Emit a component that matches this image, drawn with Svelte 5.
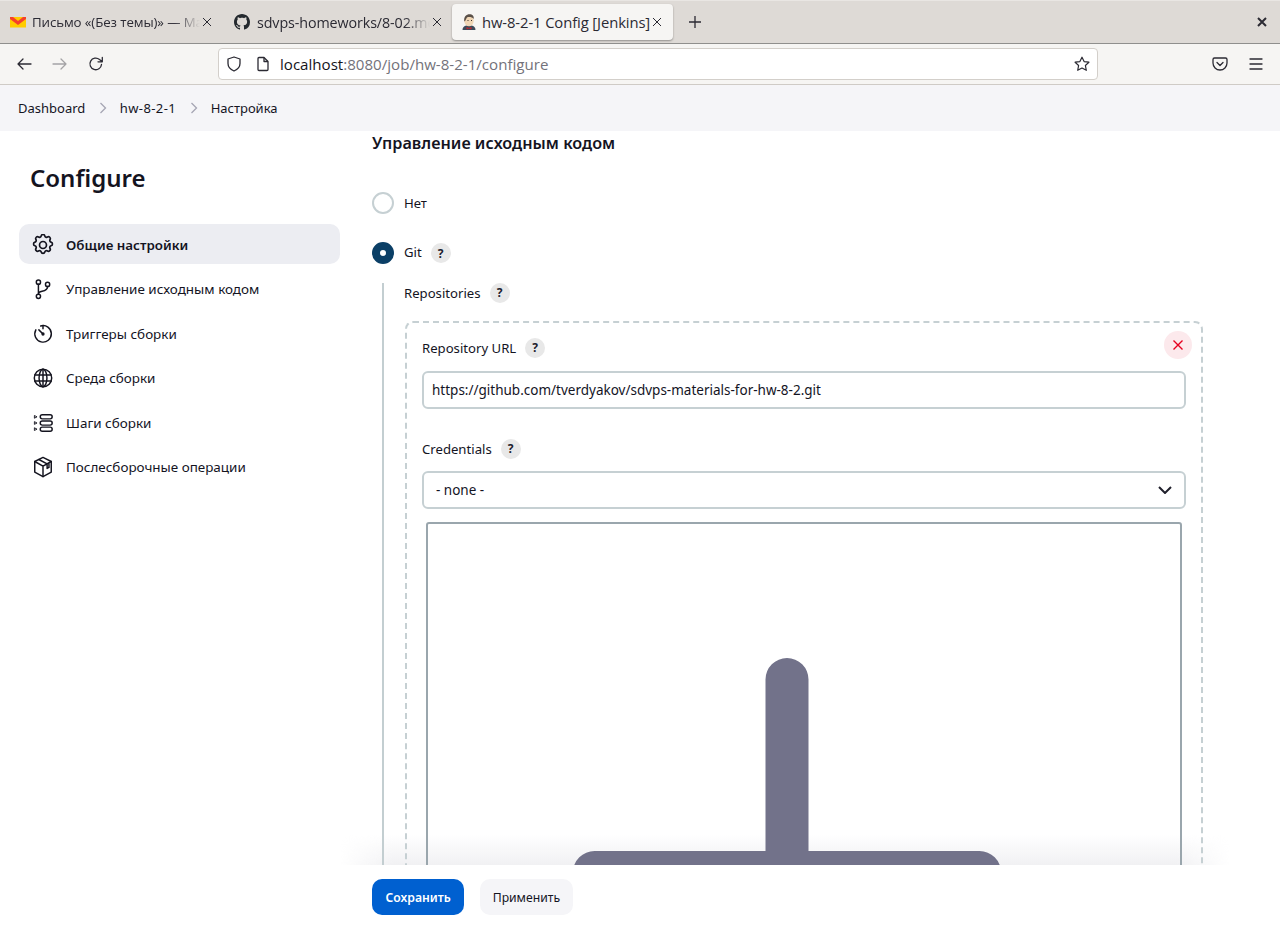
<script>
  const navItems = [
    { label: 'Общие настройки', icon: 'gear', active: true },
    { label: 'Управление исходным кодом', icon: 'branch' },
    { label: 'Триггеры сборки', icon: 'timer' },
    { label: 'Среда сборки', icon: 'globe' },
    { label: 'Шаги сборки', icon: 'steps' },
    { label: 'Послесборочные операции', icon: 'box' }
  ];
</script>

<div class="window">
  <div class="tabbar">
    <div class="tab mail">
      <svg class="favicon" viewBox="0 0 16 16"><path d="M0 3h16v10.5H0z" fill="#ffcc00"/><path d="M0 3h3l5 4 5-4h3v2l-8 6-8-6z" fill="#f5402c"/></svg>
      <span class="tab-title faded">Письмо «(Без темы)» — Mail</span>
      <svg class="tab-x" viewBox="0 0 10 10"><path d="M1 1l8 8M9 1l-8 8"/></svg>
    </div>
    <div class="tab github">
      <svg class="favicon" viewBox="0 0 16 16"><path fill="#24292e" d="M8 0C3.58 0 0 3.58 0 8c0 3.54 2.29 6.53 5.47 7.59.4.07.55-.17.55-.38 0-.19-.01-.82-.01-1.49-2.01.37-2.53-.49-2.69-.94-.09-.23-.48-.94-.82-1.13-.28-.15-.68-.52-.01-.53.63-.01 1.08.58 1.23.82.72 1.21 1.87.87 2.33.66.07-.52.28-.87.51-1.07-1.78-.2-3.64-.89-3.64-3.95 0-.87.31-1.59.82-2.15-.08-.2-.36-1.02.08-2.12 0 0 .67-.21 2.2.82.64-.18 1.32-.27 2-.27s1.36.09 2 .27c1.53-1.04 2.2-.82 2.2-.82.44 1.1.16 1.92.08 2.12.51.56.82 1.27.82 2.15 0 3.07-1.87 3.75-3.65 3.95.29.25.54.73.54 1.48 0 1.07-.01 1.93-.01 2.2 0 .21.15.46.55.38A8.01 8.01 0 0 0 16 8c0-4.42-3.58-8-8-8z"/></svg>
      <span class="tab-title faded">sdvps-homeworks/8-02.md</span>
      <svg class="tab-x" viewBox="0 0 10 10"><path d="M1 1l8 8M9 1l-8 8"/></svg>
    </div>
    <div class="tab current">
      <svg class="favicon" viewBox="0 0 16 16">
        <path d="M1.500 16c0-2.500 1.500-4 4-4.500h5c2.500.5 4 2 4 4.500z" fill="#3d4a5a"/>
        <path d="M5.500 13l2.500 1 2.500-1v2.500L8 14.500l-2.500 1z" fill="#c2262e"/>
        <ellipse cx="8" cy="6.800" rx="4.700" ry="5.500" fill="#f0d6b5"/>
        <path d="M3.300 7.500C2.500 2.500 5.500.3 8.500.3c3 0 4.700 2 4.200 4.700-1.500-2-5-2.500-6.700-1.500C5 4.800 5 6.500 3.300 7.500z" fill="#5a5048"/>
        <path d="M6.500 6.500h1M10 6.500h1" stroke="#3a3028" stroke-width="1"/>
      </svg>
      <span class="tab-title">hw-8-2-1 Config [Jenkins]</span>
      <svg class="tab-x" viewBox="0 0 10 10"><path d="M1 1l8 8M9 1l-8 8"/></svg>
    </div>
    <svg class="new-tab" viewBox="0 0 14 14"><path d="M7 1v12M1 7h12"/></svg>
    <svg class="win-close" viewBox="0 0 10 10"><path d="M1 1l8 8M9 1l-8 8"/></svg>
  </div>

  <div class="navbar">
    <svg class="nav-icon back" viewBox="0 0 16 16"><path d="M15 8H2M7 3L2 8l5 5"/></svg>
    <svg class="nav-icon fwd" viewBox="0 0 16 16"><path d="M1 8h13M9 3l5 5-5 5"/></svg>
    <svg class="nav-icon reload" viewBox="0 0 16 16"><path d="M13.500 8.500A5.800 5.800 0 1 1 11.500 3.500L14 5.500M14.300 1.500v4.300h-4.300"/></svg>
    <div class="urlbar">
      <svg class="url-icon" viewBox="0 0 16 16"><path d="M8 1l6 2v4.500c0 3.500-2.500 6-6 7.500-3.500-1.500-6-4-6-7.500V3z"/></svg>
      <svg class="url-icon doc" viewBox="0 0 16 16"><path d="M3 2.500a1 1 0 0 1 1-1h5l4 4v8a1 1 0 0 1-1 1H4a1 1 0 0 1-1-1z"/><path d="M9 1.500v4h4" /></svg>
      <span class="url"><b>localhost</b>:8080/job/hw-8-2-1/configure</span>
      <svg class="star" viewBox="0 0 16 16"><path d="M8 1.200l2.100 4.400 4.800.6-3.500 3.300.9 4.800L8 12l-4.300 2.300.9-4.800L1.100 6.200l4.800-.6z"/></svg>
    </div>
    <svg class="nav-icon pocket" viewBox="0 0 16 16"><path d="M2.500 2h11A1.500 1.500 0 0 1 15 3.500V7a7 7 0 0 1-14 0V3.500A1.500 1.500 0 0 1 2.500 2z"/><path d="M5 6.500l3 3 3-3"/></svg>
    <svg class="nav-icon menu" viewBox="0 0 16 16"><path d="M2 3h12M2 8h12M2 13h12"/></svg>
  </div>

  <div class="breadcrumbs">
    <span>Dashboard</span>
    <svg class="crumb-sep" viewBox="0 0 8 12"><path d="M1.500 1l5 5-5 5"/></svg>
    <span class="crumb-job">hw-8-2-1</span>
    <svg class="crumb-sep" viewBox="0 0 8 12"><path d="M1.500 1l5 5-5 5"/></svg>
    <span>Настройка</span>
  </div>

  <div class="page">
    <div class="fade"></div>

    <aside class="sidebar">
      <h1>Configure</h1>
      <nav>
        {#each navItems as item}
          <div class="nav-item" class:active={item.active}>
            <svg class="side-icon" viewBox="0 0 24 24">
              {#if item.icon === 'gear'}
                <g transform="translate(12 12) scale(1.150) translate(-12 -12)">
                  <path d="M10.300 3.300c.4-1.700 3-1.700 3.400 0a1.700 1.700 0 0 0 2.600 1.100c1.500-.9 3.300.8 2.400 2.400a1.700 1.700 0 0 0 1 2.500c1.700.4 1.700 3 0 3.400a1.700 1.700 0 0 0-1 2.600c.9 1.500-.9 3.300-2.400 2.400a1.700 1.700 0 0 0-2.600 1c-.4 1.700-3 1.700-3.400 0a1.700 1.700 0 0 0-2.600-1c-1.500.9-3.300-.9-2.400-2.400a1.700 1.700 0 0 0-1-2.600c-1.700-.4-1.700-3 0-3.400a1.700 1.700 0 0 0 1-2.500c-.9-1.600.9-3.300 2.400-2.400a1.700 1.700 0 0 0 2.600-1.100z"/>
                  <circle cx="12" cy="12" r="3.300"/>
                </g>
              {:else if item.icon === 'branch'}
                <circle cx="7" cy="4.500" r="2.300"/><circle cx="7" cy="20" r="2.300"/><circle cx="17" cy="7" r="2.300"/>
                <path d="M7 6.800v11M17 9.300c0 4-3.500 4.700-6 5.200-2 .4-4 1-4 3"/>
              {:else if item.icon === 'timer'}
                <path d="M9.500 3.200A9 9 0 1 1 4.200 7.500"/><path d="M12 12L7.500 7.500M12 2.800v3.500"/><circle cx="12" cy="12" r="1"/>
              {:else if item.icon === 'globe'}
                <circle cx="12" cy="12" r="9.500"/><ellipse cx="12" cy="12" rx="4.300" ry="9.500"/><path d="M3 8.800h18M3 15.200h18M12 2.500v19"/>
              {:else if item.icon === 'steps'}
                <rect x="9" y="3" width="13" height="4.500" rx="2.200"/><rect x="9" y="9.800" width="13" height="4.500" rx="2.200"/><rect x="9" y="16.500" width="13" height="4.500" rx="2.200"/>
                <path class="thin" d="M3 4l2.500 1.300L3 6.600zM3 10.700l2.500 1.300L3 13.300zM3 17.400l2.500 1.300L3 20z"/>
              {:else}
                <path d="M12 1.500l9 4.500v11.500L12 22.500 3 17.500V6z"/><path d="M3 6l9 5 9-5M12 11v11.500M7.500 3.800l9 4.800v5l2-1.100V7.500"/>
              {/if}
            </svg>
            <span>{item.label}</span>
          </div>
        {/each}
      </nav>
    </aside>

    <main class="content">
      <h2>Управление исходным кодом</h2>

      <div class="radio-row none">
        <span class="radio"></span>
        <span class="lbl">Нет</span>
      </div>
      <div class="radio-row git">
        <span class="radio on"></span>
        <span class="lbl">Git</span>
        <span class="help">?</span>
      </div>

      <div class="nested">
        <div class="field-label repos">Repositories <span class="help">?</span></div>
        <div class="repeat-box">
          <button class="remove" aria-label="Remove">
            <svg viewBox="0 0 12 12"><path d="M1.500 1.500l9 9M10.500 1.500l-9 9"/></svg>
          </button>
          <div class="field-label">Repository URL <span class="help">?</span></div>
          <input class="text-input" value="https://github.com/tverdyakov/sdvps-materials-for-hw-8-2.git" />
          <div class="field-label creds">Credentials <span class="help">?</span></div>
          <div class="select">
            <span>- none -</span>
            <svg viewBox="0 0 14 8"><path d="M1 1l6 6 6-6"/></svg>
          </div>
          <div class="add-frame">
            <svg class="big-plus" viewBox="0 0 428 400"><path d="M214 21.500V400M21.500 214.500H406.500"/></svg>
          </div>
        </div>
      </div>
    </main>
  </div>

  <div class="bottom-bar">
    <button class="btn primary">Сохранить</button>
    <button class="btn">Применить</button>
  </div>
</div>

<style>
  :global(body) {
    margin: 0;
    background: #fff;
  }

  .window {
    display: flex;
    flex-direction: column;
    height: 928px;
    overflow: hidden;
    font-family: "Noto Sans", sans-serif;
    color: #14141f;
  }

  /* browser chrome */
  .tabbar {
    display: flex;
    align-items: center;
    height: 42px;
    flex: none;
    background: #dedad6;
    border-top: 1px solid #e9e6e3;
    border-bottom: 1px solid #8f8f8d;
    font-family: "Open Sans", sans-serif;
    font-size: 14px;
    color: #2b2a33;
  }

  .tab {
    display: flex;
    align-items: center;
    height: 36px;
    box-sizing: border-box;
  }

  .tab.mail {
    width: 222px;
    padding: 0 10px;
    font-size: 13.300px;
  }

  .tab.github {
    width: 225px;
    padding: 0 5px 0 12px;
    font-size: 14.300px;
  }

  .tab.github .favicon {
    margin-right: 7px;
  }

  .tab.current {
    width: 221px;
    margin-left: 5px;
    padding: 0 11px 0 9px;
    background: #f6f5f3;
    border-radius: 4px;
    box-shadow: 0 1px 2px rgba(0, 0, 0, 0.35);
    font-size: 14.800px;
  }

  .tab.current .favicon {
    margin-right: 5px;
  }

  .favicon {
    width: 16px;
    height: 16px;
    flex: none;
    margin-right: 6px;
  }

  .tab-title {
    flex: 1;
    min-width: 0;
    white-space: nowrap;
    overflow: hidden;
    letter-spacing: -0.1px;
  }

  .tab-title.faded {
    -webkit-mask-image: linear-gradient(to right, #000 85%, transparent);
    mask-image: linear-gradient(to right, #000 85%, transparent);
  }

  .tab-x {
    width: 10px;
    height: 10px;
    flex: none;
    margin-left: 2px;
    fill: none;
    stroke: #2b2a33;
    stroke-width: 1;
  }

  .new-tab {
    width: 14px;
    height: 14px;
    margin-left: 15px;
    fill: none;
    stroke: #2b2a33;
    stroke-width: 1.300;
  }

  .win-close {
    width: 10px;
    height: 10px;
    margin-left: auto;
    margin-right: 13px;
    fill: none;
    stroke: #2b2a33;
    stroke-width: 2;
  }

  .navbar {
    display: flex;
    align-items: center;
    height: 41px;
    flex: none;
    box-sizing: border-box;
    background: #f6f5f3;
    border-bottom: 1px solid #cfcbc6;
    font-family: "Open Sans", sans-serif;
  }

  .nav-icon {
    width: 16px;
    height: 16px;
    flex: none;
    fill: none;
    stroke: #2b2a33;
    stroke-width: 1.300;
    stroke-linejoin: round;
    stroke-linecap: round;
  }

  .back { margin-left: 16px; }
  .fwd { margin-left: 20px; opacity: 0.4; }
  .reload { margin-left: 20px; }
  .pocket { margin-left: 114px; }
  .menu { margin-left: 20px; }

  .urlbar {
    display: flex;
    align-items: center;
    width: 880px;
    height: 32px;
    margin-left: 114px;
    box-sizing: border-box;
    padding: 0 7px;
    background: #fff;
    border: 1px solid #d3cfca;
    border-radius: 4px;
  }

  .url-icon {
    width: 16px;
    height: 16px;
    flex: none;
    margin-right: 13px;
    fill: none;
    stroke: #2b2a33;
    stroke-width: 1.300;
    stroke-linejoin: round;
  }

  .url-icon.doc {
    margin-right: 9px;
  }

  .url {
    flex: 1;
    padding-bottom: 1px;
    font-size: 15.100px;
    color: #73727a;
    white-space: nowrap;
  }

  .url b {
    font-weight: 400;
    color: #15141a;
  }

  .star {
    width: 16px;
    height: 16px;
    fill: none;
    stroke: #2b2a33;
    stroke-width: 1.200;
    stroke-linejoin: round;
  }

  .breadcrumbs {
    display: flex;
    align-items: center;
    height: 46px;
    flex: none;
    box-sizing: border-box;
    padding: 0 18px;
    background: #f5f5f8;
    font-size: 13px;
    color: #14141f;
  }

  .crumb-sep {
    width: 8px;
    height: 12px;
    margin: 0 13px 0 13.500px;
    fill: none;
    stroke: #a5a5b4;
    stroke-width: 1.300;
  }

  .crumb-job {
    letter-spacing: 0.4px;
  }

  /* jenkins page */
  .page {
    position: relative;
    display: flex;
    flex: 1;
    min-height: 0;
    overflow: hidden;
  }

  .sidebar {
    width: 372px;
    flex: none;
    box-sizing: border-box;
    padding: 30px 32px 0 19px;
  }

  h1 {
    margin: 0 0 29px 11px;
    font-size: 24px;
    line-height: 34px;
    font-weight: 600;
    color: #14141f;
  }

  .nav-item {
    display: flex;
    align-items: center;
    height: 40px;
    margin-bottom: 4.600px;
    padding-left: 13px;
    box-sizing: border-box;
    padding-top: 1px;
    border-radius: 10px;
    font-size: 13.450px;
    color: #14141f;
  }

  .nav-item.active {
    background: #ecedf2;
    font-size: 13.350px;
    font-weight: 600;
  }

  .side-icon {
    width: 22px;
    height: 22px;
    flex: none;
    margin-right: 12px;
    fill: none;
    stroke: #14141f;
    stroke-width: 1.600;
    stroke-linejoin: round;
    stroke-linecap: round;
  }

  .side-icon .thin {
    stroke-width: 1;
  }

  .content {
    position: relative;
    flex: 1;
    min-width: 0;
    padding-right: 77px;
    font-size: 13.150px;
  }

  h2 {
    margin: 1px 0 0;
    font-size: 16.200px;
    line-height: 22px;
    font-weight: 600;
    color: #14141f;
  }

  .radio-row {
    display: flex;
    align-items: center;
    height: 22px;
  }

  .radio-row.none { margin-top: 38px; }
  .radio-row.git { margin-top: 28px; }

  .radio {
    box-sizing: border-box;
    width: 22px;
    height: 22px;
    flex: none;
    margin-right: 10px;
    border: 2px solid #c6d0d3;
    border-radius: 50%;
    background: #fff;
  }

  .radio.on {
    border: 8px solid #0b3f66;
  }

  .lbl {
    line-height: 22px;
    margin-top: -1px;
  }

  .git .lbl {
    margin-top: -2px;
  }

  .help {
    display: inline-flex;
    align-items: center;
    justify-content: center;
    width: 20px;
    height: 20px;
    margin-left: 9px;
    border-radius: 50%;
    background: #e8e8e8;
    font-size: 12px;
    font-weight: 700;
    color: #20202c;
  }

  .nested {
    margin: 19px 0 0 10px;
    padding-left: 20px;
    border-left: 2px solid #c3ced1;
  }

  .field-label {
    display: flex;
    align-items: center;
    height: 20px;
    line-height: 20px;
  }

  .field-label .help {
    margin-left: 9px;
  }

  .repeat-box {
    position: relative;
    margin: 18px 0 0 1px;
    padding: 15px 15px 0;
    border: 2px dashed #c6d0d3;
    border-radius: 8px;
    height: 1000px;
  }

  .remove {
    position: absolute;
    top: 8px;
    right: 9px;
    display: flex;
    align-items: center;
    justify-content: center;
    width: 28px;
    height: 28px;
    padding: 0;
    border: none;
    border-radius: 50%;
    background: #fce9ec;
  }

  .remove svg {
    width: 12px;
    height: 12px;
    fill: none;
    stroke: #e6001f;
    stroke-width: 1.400;
  }

  .text-input {
    display: block;
    width: 100%;
    height: 38px;
    margin-top: 13px;
    box-sizing: border-box;
    padding: 0 8px;
    border: 2px solid #c6d0d3;
    border-radius: 6px;
    font: inherit;
    font-size: 13.500px;
    color: #14141f;
    outline: none;
  }

  .creds {
    margin-top: 30px;
  }

  .select {
    display: flex;
    align-items: center;
    justify-content: space-between;
    height: 38px;
    margin-top: 12px;
    box-sizing: border-box;
    padding: 0 12px;
    border: 2px solid #c6d0d3;
    border-radius: 6px;
    font-size: 13.500px;
  }

  .select svg {
    width: 14px;
    height: 8px;
    fill: none;
    stroke: #20202c;
    stroke-width: 2;
  }

  .add-frame {
    position: relative;
    margin: 13px 4px 0;
    height: 600px;
    box-sizing: border-box;
    border: 2px solid #9aa6ad;
    border-radius: 3px;
  }

  .big-plus {
    position: absolute;
    left: 145px;
    top: 134px;
    width: 428px;
    height: 400px;
    fill: none;
    stroke: #72728a;
    stroke-width: 43;
    stroke-linecap: round;
  }

  .fade {
    position: absolute;
    left: 340px;
    right: 50px;
    bottom: 0;
    height: 30px;
    background: linear-gradient(to bottom, rgba(235, 235, 238, 0), rgba(235, 235, 238, 0.7));
    -webkit-mask-image: linear-gradient(to right, transparent, #000 6%, #000 94%, transparent);
    mask-image: linear-gradient(to right, transparent, #000 6%, #000 94%, transparent);
    pointer-events: none;
  }

  .bottom-bar {
    display: flex;
    gap: 16px;
    height: 63px;
    flex: none;
    box-sizing: border-box;
    padding: 14px 0 0 372px;
    background: #fff;
  }

  .btn {
    height: 36px;
    padding: 0 12.500px;
    border: none;
    border-radius: 10px;
    background: #f5f5f8;
    font-family: "Noto Sans", sans-serif;
    font-size: 12.200px;
    color: #14141f;
  }

  .btn.primary {
    padding: 0 13.500px;
    background: #0060d0;
    color: #fff;
    font-weight: 600;
  }
</style>
